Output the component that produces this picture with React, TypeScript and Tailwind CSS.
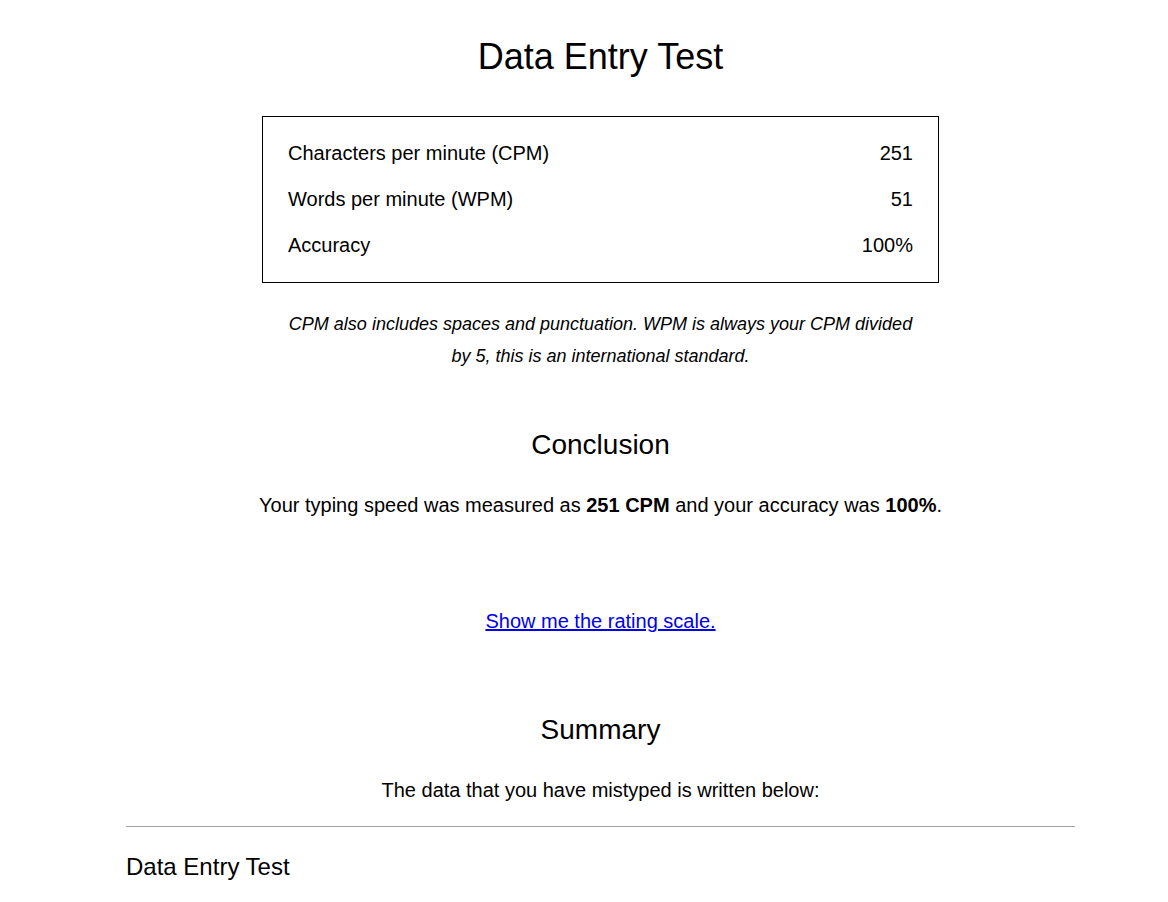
import React from "react";

const stats = [
  { label: "Characters per minute (CPM)", value: "251" },
  { label: "Words per minute (WPM)", value: "51" },
  { label: "Accuracy", value: "100%" },
];

export default function App() {
  return (
    <div className="min-h-screen bg-white text-black font-['Liberation_Sans',Arial,sans-serif]">
      <div className="ml-[126px] w-[949px] pt-[36px] pb-10">
        <h1 className="text-center text-[36px] leading-[42px]">Data Entry Test</h1>

        <div className="mx-auto mt-[38px] w-[677px] border border-black px-[25px] pt-[13px] pb-[14px]">
          {stats.map((s) => (
            <div key={s.label} className="flex h-[46px] items-center justify-between text-[20px]">
              <span>{s.label}</span>
              <span>{s.value}</span>
            </div>
          ))}
        </div>

        <p className="mx-auto mt-[25px] w-[640px] text-center text-[18px] italic leading-[32px]">
          CPM also includes spaces and punctuation. WPM is always your CPM divided by 5, this is an
          international standard.
        </p>

        <h2 className="mt-[56px] text-center text-[28px] leading-[34px]">Conclusion</h2>
        <p className="mt-[29px] text-center text-[20px] leading-[28px]">
          Your typing speed was measured as <b>251 CPM</b> and your accuracy was <b>100%</b>.
        </p>

        <p className="mt-[88px] text-center text-[20px] leading-[28px]">
          <a href="#" className="text-[#0000ee] underline">
            Show me the rating scale.
          </a>
        </p>

        <h2 className="mt-[78px] text-center text-[28px] leading-[34px]">Summary</h2>
        <p className="mt-[29px] text-center text-[20px] leading-[28px]">
          The data that you have mistyped is written below:
        </p>

        <hr className="mt-[22px] border-t border-[#a0a0a0]" />

        <h3 className="mt-[25px] text-[24px] leading-[30px]">Data Entry Test</h3>
      </div>
    </div>
  );
}
